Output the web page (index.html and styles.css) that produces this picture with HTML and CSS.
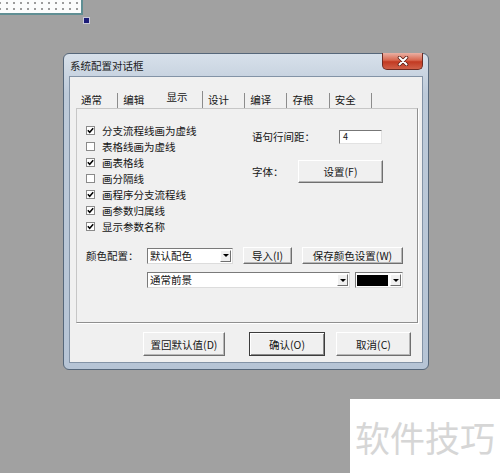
FILE: index.html
```html
<!DOCTYPE html>
<html lang="zh-CN">
<head>
    <meta charset="UTF-8">
    <meta name="viewport" content="width=device-width, initial-scale=1.0">
    <title>系统配置对话框</title>
    <link rel="stylesheet" href="styles.css">
</head>
<body>
    <div class="canvas-corner"></div>
    <div class="handle"></div>

    <div class="dialog">
        <div class="titlebar">
            <span class="title">系统配置对话框</span>
            <div class="close-btn">
                <svg width="14" height="10" viewBox="0 0 14 10">
                    <path d="M3.5 1.5 L10.5 8.5 M10.5 1.5 L3.5 8.5" stroke="#5a1f16" stroke-width="3.6" stroke-linecap="round"/>
                    <path d="M3.5 1.5 L10.5 8.5 M10.5 1.5 L3.5 8.5" stroke="#fff" stroke-width="2" stroke-linecap="round"/>
                </svg>
            </div>
        </div>

        <div class="client">
            <div class="tabs">
                <div class="tab">通常</div>
                <div class="tab no-sep">编辑</div>
                <div class="tab active">显示</div>
                <div class="tab">设计</div>
                <div class="tab">编译</div>
                <div class="tab">存根</div>
                <div class="tab">安全</div>
            </div>

            <div class="panel">
                <div class="top">
                    <div class="checks">
                        <div class="check"><span class="box"><svg width="7" height="7" viewBox="0 0 7 7"><polyline points="0.8,3.3 2.7,5.3 6.2,1.3" fill="none" stroke="#000" stroke-width="1.5"/></svg></span>分支流程线画为虚线</div>
                        <div class="check"><span class="box"></span>表格线画为虚线</div>
                        <div class="check"><span class="box"><svg width="7" height="7" viewBox="0 0 7 7"><polyline points="0.8,3.3 2.7,5.3 6.2,1.3" fill="none" stroke="#000" stroke-width="1.5"/></svg></span>画表格线</div>
                        <div class="check"><span class="box"></span>画分隔线</div>
                        <div class="check"><span class="box"><svg width="7" height="7" viewBox="0 0 7 7"><polyline points="0.8,3.3 2.7,5.3 6.2,1.3" fill="none" stroke="#000" stroke-width="1.5"/></svg></span>画程序分支流程线</div>
                        <div class="check"><span class="box"><svg width="7" height="7" viewBox="0 0 7 7"><polyline points="0.8,3.3 2.7,5.3 6.2,1.3" fill="none" stroke="#000" stroke-width="1.5"/></svg></span>画参数归属线</div>
                        <div class="check"><span class="box"><svg width="7" height="7" viewBox="0 0 7 7"><polyline points="0.8,3.3 2.7,5.3 6.2,1.3" fill="none" stroke="#000" stroke-width="1.5"/></svg></span>显示参数名称</div>
                    </div>
                    <div class="side">
                        <div class="side-row">
                            <span class="side-label">语句行间距：</span>
                            <span class="input">4</span>
                        </div>
                        <div class="side-row font-row">
                            <span class="side-label short">字体：</span>
                            <span class="btn font-btn">设置(F)</span>
                        </div>
                    </div>
                </div>

                <div class="color-row">
                    <span class="color-label">颜色配置：</span>
                    <div class="combo scheme">
                        <span class="combo-text">默认配色</span>
                        <span class="arrow"><i class="tri"></i></span>
                    </div>
                    <span class="btn import-btn">导入(I)</span>
                    <span class="btn save-btn">保存颜色设置(W)</span>
                </div>
                <div class="color-row second">
                    <div class="combo element">
                        <span class="combo-text">通常前景</span>
                        <span class="arrow"><i class="tri"></i></span>
                    </div>
                    <div class="combo color-pick">
                        <span class="swatch"></span>
                        <span class="combo-text"></span>
                        <span class="arrow"><i class="tri"></i></span>
                    </div>
                </div>
            </div>

            <div class="buttons">
                <span class="btn reset-btn">置回默认值(D)</span>
                <span class="btn ok-btn default">确认(O)</span>
                <span class="btn cancel-btn">取消(C)</span>
            </div>
        </div>
    </div>

    <div class="watermark">软件技巧</div>
</body>
</html>
```

FILE: styles.css
```css
body {
    margin: 0;
    width: 500px;
    height: 473px;
    position: relative;
    overflow: hidden;
    background: #a1a1a1;
    font-family: "Noto Sans CJK SC", "Noto Sans", sans-serif;
    font-size: 10.5px;
    color: #151515;
}
.canvas-corner {
    position: absolute;
    left: 0;
    top: 0;
    width: 81px;
    height: 13px;
    background-color: #fbfcfc;
    background-image: radial-gradient(circle at 3px 3px, #9c9c9c 0.9px, transparent 1.3px);
    background-size: 7px 6px;
    background-position: 4px 0;
    border-right: 2px solid #5f8e93;
    border-bottom: 2px solid #5f8e93;
}
.handle {
    position: absolute;
    left: 83px;
    top: 17px;
    width: 5px;
    height: 5px;
    background: #1c1c78;
    border: 1px solid #c9c9d9;
}
.dialog {
    position: absolute;
    left: 63px;
    top: 53px;
    width: 366px;
    height: 317px;
    box-sizing: border-box;
    border: 1px solid #56677a;
    border-radius: 6px;
    background: linear-gradient(#d7e0ea, #bdcad9 40px, #b6c4d5);
    padding: 0 5px 6px 5px;
    display: flex;
    flex-direction: column;
}
.titlebar {
    height: 22px;
    flex-shrink: 0;
    display: flex;
    align-items: center;
    position: relative;
}
.title {
    padding-left: 1px;
    margin-top: 1px;
    color: #1b1b1b;
}
.close-btn {
    position: absolute;
    top: -1px;
    right: 0;
    width: 41px;
    height: 17px;
    box-sizing: border-box;
    border: 1px solid #6e2b22;
    border-top: none;
    border-radius: 0 0 5px 5px;
    background: linear-gradient(#eab0a3, #d8674f 45%, #c23a22 55%, #d06048);
    display: flex;
    justify-content: center;
    align-items: center;
}
.client {
    flex: 1;
    background: #f0f0f0;
    border: 1px solid #8393a6;
    padding: 14px 4px 0 6px;
}
.tabs {
    display: flex;
    height: 17px;
}
.tab {
    width: 42.3px;
    height: 15px;
    margin-top: 2px;
    box-sizing: border-box;
    padding-left: 5px;
    line-height: 13px;
    border-right: 1px solid #8c8c8c;
}
.tab.no-sep {
    border-right-color: transparent;
}
.tab.active {
    margin-top: 0;
    height: 17px;
    line-height: 12px;
    padding-left: 6px;
}
.panel {
    height: 215px;
    box-sizing: border-box;
    border: 1px solid;
    border-color: #c6c6c6 #8f8f8f #8f8f8f #c6c6c6;
    box-shadow: 1px 1px 0 #fff;
    padding: 13px 0 0 9px;
}
.top {
    display: flex;
}
.checks {
    width: 166px;
}
.check {
    display: flex;
    align-items: center;
    height: 16px;
}
.box {
    width: 9px;
    height: 9px;
    box-sizing: border-box;
    border: 1px solid #8a8a8a;
    background: #fff;
    margin-right: 7px;
    display: flex;
    align-items: center;
    justify-content: center;
}
.side {
    padding-top: 7px;
}
.side-row {
    display: flex;
    align-items: center;
}
.side-label {
    width: 87px;
}
.side-label.short {
    width: 46px;
}
.input {
    width: 43px;
    height: 14px;
    box-sizing: border-box;
    background: #fff;
    border: 1px solid;
    border-color: #777 #e2e2e2 #e2e2e2 #777;
    padding-left: 3px;
    line-height: 12px;
    font-size: 9px;
}
.font-row {
    margin-top: 16px;
}
.btn {
    display: flex;
    align-items: center;
    justify-content: center;
    box-sizing: border-box;
    background: #f0f0f0;
    border: 1px solid;
    border-color: #fff #6f6f6f #6f6f6f #fff;
    box-shadow: inset -1px -1px 0 #b7b7b7;
}
.font-btn {
    width: 85px;
    height: 23px;
}
.color-row {
    display: flex;
    align-items: center;
    margin-top: 13px;
}
.color-row.second {
    margin-top: 8px;
    padding-left: 61px;
}
.color-label {
    width: 61px;
}
.combo {
    display: flex;
    align-items: center;
    height: 16px;
    box-sizing: border-box;
    background: #fff;
    border: 1px solid;
    border-color: #7a7a7a #dcdcdc #dcdcdc #7a7a7a;
}
.combo-text {
    flex: 1;
    padding-left: 2px;
    line-height: 14px;
}
.arrow {
    width: 11px;
    height: 12px;
    margin-right: 1px;
    box-sizing: border-box;
    border: 1px solid;
    border-color: #fff #707070 #707070 #fff;
    background: #f0f0f0;
    display: flex;
    align-items: center;
    justify-content: center;
}
.tri {
    width: 0;
    height: 0;
    border-left: 3px solid transparent;
    border-right: 3px solid transparent;
    border-top: 3px solid #000;
}
.scheme {
    width: 86px;
}
.import-btn {
    width: 49px;
    height: 17px;
    margin-left: 10px;
}
.save-btn {
    width: 101px;
    height: 17px;
    margin-left: 10px;
}
.element {
    width: 203px;
}
.color-pick {
    width: 48px;
    margin-left: 5px;
}
.swatch {
    width: 31px;
    height: 11px;
    margin-left: 1px;
    background: #000;
}
.buttons {
    display: flex;
    justify-content: flex-end;
    margin: 9px 7px 0 0;
}
.buttons .btn {
    height: 24px;
}
.reset-btn {
    width: 82px;
}
.ok-btn {
    width: 76px;
    margin-left: 24px;
}
.cancel-btn {
    width: 75px;
    margin-left: 11px;
}
.btn.default {
    border-color: #3c3c3c;
    box-shadow: inset 1px 1px 0 #fff, inset -1px -1px 0 #8a8a8a;
}
.watermark {
    position: absolute;
    right: 0;
    bottom: 0;
    width: 150px;
    height: 74px;
    box-sizing: border-box;
    padding-left: 5px;
    background: #fff;
    display: flex;
    align-items: center;
    font-size: 35px;
    color: #d6d6d6;
}
```
